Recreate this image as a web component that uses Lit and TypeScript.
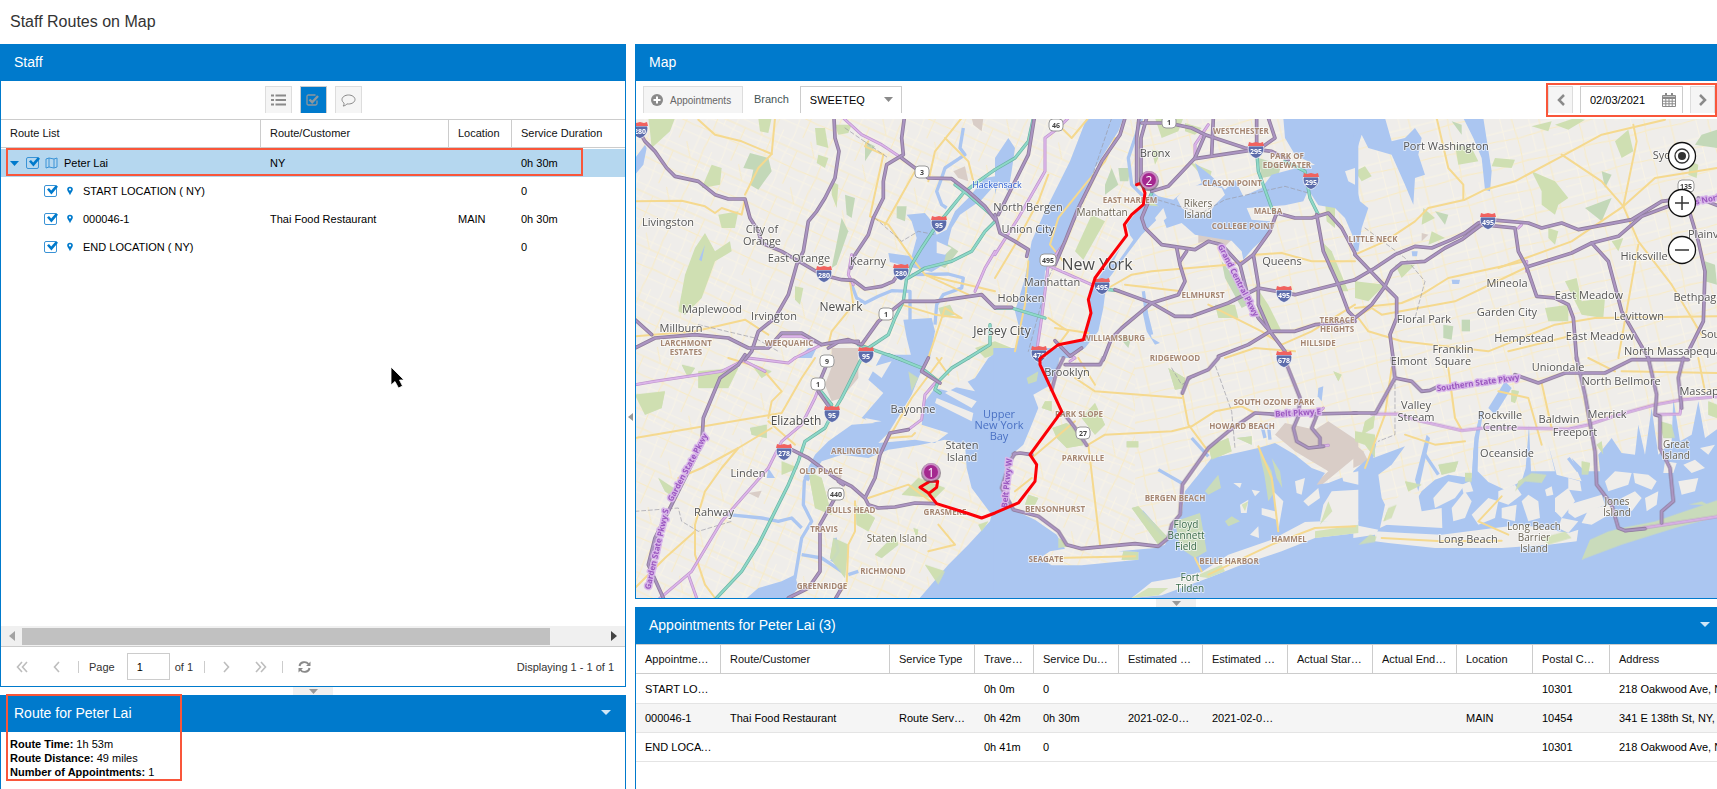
import { LitElement, html, svg, css } from "lit";
import { customElement, property } from "lit/decorators.js";

/* ---------- map data: tiles of 1080 x 720 units, three units to a pixel ---------- */

interface Tile {
  x: number;
  y: number;
  water: string[];
  rivers: string[];
  land: string[];
  green: string[];
  grey: string[];
  yellow: string[];
  pink: string[];
  teal: string[];
  hwy: string[];
}

const TILES: Tile[] = [
  {
    x: 0,
    y: 0,
    water: [
      "M815,290 870,285 890,310 905,350 935,335 960,280 1000,240 1050,180 1080,175 1080,200 1040,245 975,290 950,330 940,370 935,400 925,440 890,462 765,432 760,405 830,415 845,360 830,310",
      "M805,605 890,600 900,640 885,720 830,720 815,660",
      "M210,380 200,430 192,425",
      "M0,120 30,80 35,90 25,140 0,170",
      "M490,720 520,690 545,690 530,720",
    ],
    rivers: [
      "M985,30 975,90 990,110 930,150 920,180 905,220 920,260 935,270",
      "M650,500 665,540 690,555 730,535 770,518 825,520 825,610",
      "M830,470 940,468 985,480 980,510 925,530 905,560 900,620",
    ],
    land: ["M905,370 950,390 930,410 905,405"],
    green: [
      "M40,0 120,0 105,40 50,90 45,40",
      "M180,390 210,345 240,400 285,370 290,400 240,430 200,540 150,590 130,580 150,470",
      "M325,150 345,105 400,120 410,160 370,215 345,200 355,155",
      "M250,290 310,280 300,330 260,330",
      "M590,190 610,200 605,270 590,230",
      "M620,300 640,340 605,440 590,450",
      "M540,30 570,30 580,90 545,80",
      "M230,140 260,150 255,200 200,210",
      "M910,360 970,400 930,450 905,440",
      "M370,0 410,0 400,45 375,40",
      "M550,110 580,120 570,150 545,135",
      "M630,230 660,240 650,300 635,290",
      "M480,505 505,510 495,560 480,545",
      "M910,570 945,560 960,590 920,600",
      "M785,265 815,265 810,310 785,300",
      "M600,20 650,20 640,45 610,50",
      "M1020,690 1080,670 1080,710 1050,720",
      "M690,70 720,85 690,130",
    ],
    grey: ["M955,160 990,145 1000,190 970,180", "M590,690 670,690 670,720 590,720", "M1010,0 1045,0 1040,40 1015,20"],
    yellow: [
      "M0,250 140,248 210,265 240,285 260,270 320,290 330,245",
      "M330,230 370,150 410,108 420,0",
      "M190,5 240,50 320,70 410,108",
      "M980,0 900,100 880,190",
      "M745,110 705,295 760,320 830,420 870,470 1000,530",
      "M700,70 690,85 745,110",
      "M930,60 1000,130 1015,190",
      "M840,160 750,320",
      "M0,655 180,640 330,605 400,650",
      "M645,490 655,560 590,640 580,680",
      "M800,560 900,590 980,600 930,570 880,720",
      "M870,470 1080,520",
    ],
    pink: ["M625,0 680,50 740,80 800,120", "M1080,400 1050,450 1020,520", "M650,410 640,470 655,500", "M480,720 560,680", "M440,655 500,655 560,680"],
    teal: [
      "M1080,155 1030,190 985,225 940,280 900,330 860,390 830,440 815,480 805,550 780,600 760,650 700,690 690,720",
      "M820,480 870,450 950,430 1010,400 1050,340 1080,310",
      "M670,680 800,725",
      "M960,200 1000,230 1080,300",
      "M1065,620 1065,680 1000,720",
    ],
    hwy: [
      "M0,20 30,70 60,100 95,150 120,175 190,190 240,230 280,243 330,243 345,300 370,340 380,375 440,400 500,435 560,470 620,485 655,487 690,513 740,505 775,490 795,460",
      "M597,0 600,60 612,100 600,180 570,240 545,280 520,310 505,400 485,440 460,530 420,600 370,640 350,700 330,725",
      "M808,0 800,60 805,110 755,140 745,190 745,240 715,300 700,350 660,410 648,450",
      "M800,120 840,150 880,180 950,182 1000,220 1050,265 1080,305",
      "M0,605 50,650",
      "M0,690 60,660 180,650 280,660 340,690 400,690 440,645 500,645 560,680 640,665 680,680 730,610 805,550 900,550 1040,530 1080,570",
      "M580,690 610,672 670,670",
    ],
  },
  {
    x: 1080,
    y: 0,
    water: [
      "M275,0 225,130 150,280 110,370 90,480 60,580 75,640 60,690 0,700 0,725 150,725 125,690 140,620 150,460 195,390 265,240 300,150 370,40 385,0",
      "M0,120 40,60 60,90 50,160 40,220 10,190 0,230",
      "M865,0 870,60 900,110 960,140 905,150 830,170 800,210 745,235 720,185 690,215 650,175 600,135 620,195 560,225 535,245 490,235 470,220 455,240 490,265 515,330 560,315 600,350 710,368 740,400 745,425 775,390 830,340 825,310 770,305 755,270 830,265 870,262 925,250 940,215 970,262 1020,270 1050,300 1080,370 1090,370 1090,0",
      "M490,265 440,260 395,320 405,350 310,480 280,540 290,590 265,660 180,695 150,715 220,720 270,690 310,640 325,570 335,490 440,350 470,320 520,270",
      "M440,570 455,590 470,660 495,675 480,680 455,640",
    ],
    rivers: ["M440,0 420,60 400,120 410,200 450,240", "M445,520 455,590 470,650"],
    land: [
      "M545,240 575,205 630,200 680,210 690,230 660,260 640,290 590,290 560,270",
      "M1050,160 1080,150 1080,200 1060,190",
      "M480,300 505,270 515,300 490,320",
      "M400,345 415,365 370,430 350,440",
    ],
    green: [
      "M290,290 330,310 265,425 240,400",
      "M480,0 565,0 550,40 500,60",
      "M330,200 350,150 370,200 330,230",
      "M990,250 1020,260 1020,330 995,310",
      "M580,130 650,160 640,200 600,150",
      "M680,430 720,480 760,560 740,570 690,480",
      "M0,670 50,690 40,720 0,720",
      "M570,15 620,30 600,50 570,40",
      "M370,150 405,150 400,190 375,190",
      "M780,500 820,560 860,640 820,630 790,590",
      "M455,240 490,245 490,265 450,300",
      "M790,120 860,140 850,170 800,180",
      "M660,560 720,560 730,600 670,600",
      "M980,370 1010,400 1060,520 1040,520 1000,450",
      "M370,655 410,655 400,690",
      "M470,95 500,100 480,140",
    ],
    grey: ["M610,325 710,365 690,385 650,365 610,375", "M630,200 655,200 645,225"],
    yellow: [
      "M340,510 410,470 470,460 700,440 740,430",
      "M780,410 860,405 950,430 1080,430",
      "M640,560 800,640 860,680 950,640 1080,560",
      "M390,500 560,520",
      "M205,430 165,380 190,300 270,200 330,130 360,60",
      "M180,630 280,645",
      "M160,600 220,640 190,680",
      "M190,20 230,60 280,0",
      "M0,480 60,380 130,250 160,170",
      "M60,700 90,560 100,430",
      "M690,720 780,690 900,700",
    ],
    pink: ["M220,0 190,30 150,60 150,160 70,300 0,410", "M205,380 160,440 140,600 125,700", "M165,445 290,500", "M640,20 600,80 600,120"],
    teal: [
      "M115,0 100,70 60,120 0,155",
      "M785,100 790,160 830,270 845,290",
      "M870,130 930,160 945,240 970,290",
      "M0,570 50,570 150,600",
      "M340,515 370,518",
      "M470,225 455,260",
    ],
    hwy: [
      "M0,290 15,345 60,370 100,395 95,415",
      "M118,0 100,110 50,210 10,290",
      "M390,0 375,50 320,130 290,190 250,270 210,370 180,440",
      "M432,0 425,60 425,200",
      "M455,0 438,60 438,200",
      "M440,15 520,15 590,30 630,50 750,90 830,100 880,125",
      "M630,50 600,120 520,205 470,220",
      "M600,122 780,95",
      "M655,0 650,110",
      "M785,0 785,90",
      "M820,0 840,60 790,95",
      "M465,240 440,300 450,330 500,380 600,395 640,370 680,380 735,440",
      "M545,390 555,440 570,490 550,530 470,555",
      "M575,400 555,430",
      "M360,515 470,555 540,595 590,595 700,555 790,510 900,530 1080,485",
      "M470,555 380,630 350,660 325,725",
      "M845,285 900,300 950,300 1000,285 1040,330 1080,405",
      "M965,290 985,400 1030,500 1060,580 1080,600",
      "M845,285 825,340 775,410 790,500 790,560 825,640 870,700",
      "M735,440 775,410",
      "M735,440 760,540 790,600 825,640",
      "M825,640 900,640 960,620 1080,610",
      "M670,715 760,680 825,640",
      "M0,568 50,568",
      "M180,668 225,715 260,690",
    ],
  },
  {
    x: 2160,
    y: 0,
    water: [
      "M-5,0 90,0 110,70 150,60 180,30 200,60 190,110 210,170 180,180 175,260 150,200 110,110 40,90 20,50 -5,130",
      "M325,0 385,0 410,160 405,220 390,215 380,120 355,60",
      "M-5,170 15,250 40,270 20,330 10,400 -5,400",
      "M290,485 315,485 312,498 292,498",
      "M170,400 188,400 186,415 172,415",
    ],
    rivers: [],
    land: [],
    green: [
      "M530,160 600,190 640,240 610,260 600,290 560,260 560,220",
      "M820,35 835,100 800,120 780,70",
      "M690,270 770,240 740,310",
      "M630,490 665,480 680,550 750,540 745,600 680,590",
      "M420,120 480,125 470,150 410,145",
      "M740,160 770,170 750,210",
      "M0,160 30,145 50,175 20,190",
      "M300,80 350,90 370,130 310,140",
      "M290,10 320,20 320,50",
      "M205,270 240,300 200,320",
      "M230,340 270,360 220,380",
      "M320,605 345,605 345,640 320,640",
      "M580,330 610,340 600,380 580,360",
      "M530,25 590,10 580,40",
      "M1040,50 1086,35 1086,90 1020,80",
      "M0,490 90,500 40,550 0,540",
      "M120,440 180,440 140,480",
      "M265,620 295,625 290,665 265,660",
      "M600,20 660,0 690,5 640,35",
      "M770,370 805,360 790,400",
      "M240,280 280,290 270,320",
      "M570,570 640,560 640,610 580,610",
      "M1005,130 1030,140 1025,180 1000,170",
      "M1050,430 1080,440 1086,500 1050,490",
    ],
    grey: ["M200,345 220,350 200,370"],
    yellow: [
      "M0,410 90,370 180,310 220,270 330,245 390,215 480,190 620,115 740,50 930,5",
      "M245,0 280,150 325,200 325,245",
      "M620,110 740,190 805,265 850,370 950,500 1040,650",
      "M835,20 845,70 805,265",
      "M805,265 650,370 430,450",
      "M1086,150 900,180 805,265",
      "M0,570 140,555 200,530 280,480 510,430",
      "M50,570 80,590 300,550 510,450",
      "M0,600 50,570",
      "M10,600 40,640 140,670 400,700 600,620 720,600 1086,595",
      "M850,380 790,720",
      "M460,700 660,650",
    ],
    pink: ["M500,320 490,330", "M515,430 515,460"],
    teal: [],
    hwy: [
      "M0,485 60,450 120,410 180,385 230,390 290,365 330,345 370,315 400,305 520,315 560,330 620,315 670,335 830,305 920,250 1000,240",
      "M0,600 50,560 90,505 110,460 140,435 210,430 270,390 320,365 380,320 480,330 490,400 515,447",
      "M515,447 650,405 710,375 790,355 860,295 940,265",
      "M710,375 760,430 800,580 880,720",
      "M515,447 545,535 600,540 640,560 655,600 665,725",
      "M1000,270 1030,370 1050,460 1045,610 1000,700",
      "M0,410 90,505 125,540 125,600 105,650 115,725",
      "M1030,240 1086,262",
    ],
  },
  {
    x: 0,
    y: 720,
    water: [
      "M830,-10 885,-10 850,60 830,110 800,160 760,225 730,255 840,245 900,255 940,225 860,200 870,130 900,90 940,100 1020,60 1060,0 1090,-20 1090,725 850,725 880,690 940,620 1000,560 1065,490 1070,470 1010,390 995,330 990,260 930,245 850,262 760,275 700,300 620,290 560,310 520,370 505,360 540,290 580,250 650,200 720,195 680,180 745,105 700,65 740,-10",
      "M330,725 370,690 440,670 480,650 490,690 460,725",
      "M400,330 420,360 395,360",
    ],
    rivers: [
      "M530,320 508,370 505,440 530,490 500,540 490,600 480,660 430,690 370,710",
      "M500,510 470,480 430,490 380,480 280,470",
      "M500,590 560,600 590,620 620,640",
      "M600,540 610,580 590,610",
      "M640,650 670,640",
    ],
    land: ["M1010,150 930,105 945,95 1025,130", "M1010,190 900,135 905,120 1015,165", "M1020,100 950,85 990,60", "M700,30 770,10 740,60", "M690,180 740,190 700,195"],
    green: [
      "M190,40 310,30 280,90 190,90",
      "M0,110 90,100 80,150 30,170",
      "M595,540 640,560 630,660 585,600",
      "M800,410 850,360 930,390 900,420",
      "M660,440 720,480 700,520 665,500",
      "M345,210 395,200 395,240 350,230",
      "M440,310 490,330 440,350",
      "M870,620 930,640 910,680",
      "M720,590 780,530 790,560 740,600",
      "M520,340 560,360 590,470 540,450",
      "M835,510 850,515 845,540",
      "M70,360 130,400 120,420 90,400",
      "M350,20 410,40 380,60",
      "M820,40 850,60 830,100",
      "M140,20 180,30 160,60",
      "M1030,500 1060,490 1040,520",
    ],
    grey: ["M600,0 670,0 670,60 620,120 590,130 570,80", "M340,405 380,398 370,420", "M600,350 620,350 615,385"],
    yellow: [
      "M0,240 440,165 500,60 540,0",
      "M750,260 830,120 920,0",
      "M760,240 830,235 840,225",
      "M400,180 410,130 440,100 380,30 280,0",
      "M400,190 480,260",
      "M410,210 310,270 260,330 210,400 180,500 180,590 210,680 240,720",
      "M0,690 90,600 180,520",
      "M660,430 660,520 640,560 635,680 600,720",
      "M700,420 820,380 900,440",
      "M910,500 960,560 880,580",
      "M130,360 200,330 310,270",
      "M905,0 940,50",
    ],
    pink: [
      "M0,80 60,70 260,40 340,0 460,15 480,0",
      "M555,80 540,120 500,200 440,250 400,330 260,490 170,640 70,725",
      "M160,650 185,720",
      "M820,215 860,185 870,110 900,75",
      "M390,40 330,10",
    ],
    teal: ["M690,-20 650,60 620,120 590,170 570,210 510,250 490,310 460,380 400,500 370,560 320,640 240,725", "M760,-10 860,30 910,70 900,95 915,105", "M910,70 950,30 1000,0", "M550,90 590,140"],
    hwy: [
      "M330,-10 310,20 255,60 230,120 205,180 200,260 110,440 60,540 40,620 85,720",
      "M575,20 550,80",
      "M550,100 585,150",
      "M470,275 520,300 600,360 650,385 690,420 700,440 730,450 780,447 840,435 900,437",
      "M690,420 720,360 735,290 765,225 820,215",
      "M880,0 860,40 915,75",
      "M600,420 555,500 555,640 520,690 460,720",
      "M600,725 620,690",
      "M610,370 625,380",
    ],
  },
  {
    x: 1080,
    y: 720,
    water: [
      "M-5,-30 200,-30 185,40 160,85 115,110 130,150 110,200 85,260 50,290 30,330 20,400 55,455 120,485 185,530 210,572 165,580 135,600 170,622 260,622 430,605 430,582 370,580 480,570 510,560 540,500 560,470 570,400 610,350 650,300 700,290 790,270 840,255 900,290 950,330 990,345 965,380 1000,375 1090,340 1090,725 -5,725",
      "M970,90 985,85 980,130 968,115",
    ],
    rivers: ["M490,335 560,375", "M590,240 640,295", "M440,460 510,540", "M820,200 825,245", "M800,200 810,240"],
    land: [
      "M410,720 470,672 540,660 620,642 700,590 830,545 930,492 1090,485 1090,525 960,540 860,580 740,620 640,660 500,712",
      "M490,440 530,415 550,430 540,470 510,475 490,460",
      "M765,530 790,505 792,540",
      "M835,400 865,430 850,515 840,450",
      "M900,370 930,360 920,410 905,405",
      "M925,430 970,390 975,420 940,445",
      "M975,490 985,440 1010,400 1090,395 1090,490",
      "M735,440 760,425 755,465 738,465",
      "M800,450 840,460 845,485 800,470",
      "M1040,350 1090,340 1090,380 1045,370",
      "M715,375 740,375 735,390",
      "M770,395 795,400 780,415",
    ],
    green: [
      "M260,180 300,135 330,200 300,230",
      "M540,490 615,465 635,580 600,600 555,570",
      "M410,450 430,445 520,540 490,560",
      "M640,265 700,240 710,280 650,305",
      "M95,60 130,40 125,70 100,78",
      "M520,30 570,60 570,90 540,95",
      "M630,400 670,350 678,390 640,410",
      "M690,490 710,475 735,490 700,505",
      "M790,270 830,340 840,400 820,430 808,350",
      "M830,300 855,340 862,390 845,360",
      "M740,440 760,430 750,460",
      "M385,580 430,582 430,605 380,605",
      "M410,720 460,690 520,690 490,712",
      "M600,655 680,620 690,640 640,660",
      "M1000,430 1012,460 975,500",
      "M100,410 130,420 120,440 90,440",
      "M190,540 230,565 190,570",
      "M960,520 1090,500 1090,525 960,540",
      "M1015,40 1040,50 1030,70",
      "M395,250 430,250 430,268 395,268",
      "M725,240 770,235 770,260",
      "M150,130 170,130 170,160 140,150",
      "M172,210 215,195 255,225 265,262 215,270 185,240",
    ],
    grey: ["M840,230 870,195 960,215 1000,190 1090,250 1090,290 1030,340 975,385 955,380 1000,340 900,280"],
    yellow: [
      "M562,105 580,200 640,280",
      "M280,260 330,230 530,220 590,205 660,160 740,145 780,165",
      "M280,260 300,430 315,560",
      "M240,60 300,100 560,120",
      "M790,265 830,360 850,520",
      "M600,600 620,640",
      "M640,650 830,560 960,510 1080,505",
      "M180,600 420,595",
      "M110,300 240,190",
      "M250,0 300,80",
      "M60,400 110,360",
    ],
    pink: ["M830,170 860,175", "M225,10 240,0 225,-10", "M975,265 1000,262", "M985,150 960,175"],
    teal: [],
    hwy: [
      "M205,0 185,40 170,95",
      "M205,165 240,210 275,262",
      "M60,285 45,310 20,390 55,455 130,475 190,520 215,560 260,572 420,557 490,565 520,540 530,500 555,470 562,380 640,270 700,220 780,165 860,170 1085,165",
      "M55,288 75,285 110,290",
      "M670,0 640,35 580,60 562,105",
      "M875,20 915,120 910,175 895,210 905,250 940,270 985,265",
      "M970,160 950,210 975,240 975,265",
      "M210,20 315,20 325,0",
    ],
  },
  {
    x: 2160,
    y: 720,
    water: [
      "M-5,340 40,300 65,250 55,300 150,265 110,320 70,350 80,420 90,440 75,510 120,488 170,450 200,400 240,365 280,350 350,360 358,240 372,180 368,340 400,372 450,395 500,370 512,330 522,200 528,340 600,340 580,260 605,350 680,370 650,300 690,340 735,340 730,290 770,240 800,285 840,290 850,200 870,290 890,150 910,290 950,250 955,120 975,250 1010,230 1030,130 1050,240 1091,210 1091,725 -5,725",
      "M450,70 470,90 420,170 400,150",
      "M180,365 215,230 225,240 190,400",
    ],
    rivers: ["M380,160 360,280 355,380", "M210,290 250,350", "M640,300 670,340"],
    land: [
      "M60,520 150,525 260,530 400,512 500,500 640,525 670,515 665,550 580,560 440,570 240,570 100,555 60,550",
      "M-5,500 70,515 60,530 -5,540",
      "M90,500 100,440 150,400 190,410 200,460 260,450 262,510 170,505",
      "M235,420 280,370 330,380 300,420 240,450",
      "M290,450 330,400 350,430 330,480 295,490",
      "M350,470 400,420 430,430 420,480 370,500",
      "M430,400 480,380 500,410 460,440 430,430",
      "M440,450 485,440 480,490 440,480",
      "M500,430 520,410 550,430 555,480 520,490",
      "M600,420 640,390 660,430 620,480 600,460",
      "M640,440 740,410 750,440 660,480 640,465",
      "M700,455 760,440 780,460 710,500 680,495",
      "M750,370 780,340 830,345 820,380 760,400",
      "M835,345 880,350 905,370 890,395 840,375",
      "M800,420 840,400 860,420 830,460",
      "M870,420 910,400 905,440 875,460",
      "M930,310 965,315 955,345 925,345",
      "M985,320 1020,305 1050,330 1010,345",
      "M970,370 1030,360 1020,400 980,410",
      "M320,380 345,370 355,400 325,405",
      "M640,360 675,370 680,400 640,395",
      "M570,395 590,385 595,410 575,415",
      "M1035,270 1080,260 1060,290",
      "M215,485 240,470 245,505 215,505",
      "M620,480 670,490 640,525 610,510",
    ],
    green: [
      "M10,560 45,530 65,535 60,552",
      "M680,605 705,545 760,520 800,510 900,490 1091,425 1091,475 960,510 800,560",
      "M530,345 575,350 560,375 510,370 480,400 490,370",
      "M680,310 705,315 700,350 680,350",
      "M470,95 492,100 480,135 468,130",
      "M250,320 310,310 300,340 260,350",
      "M0,220 60,230 60,300 30,260 0,250",
      "M100,450 125,440 110,480 85,490",
      "M560,540 630,520 650,540 580,560",
      "M150,370 200,380 160,400",
      "M725,260 740,250 745,290",
      "M1000,440 1040,430 1060,440",
      "M330,345 350,345 350,372 330,370",
      "M1060,130 1086,140 1086,180 1060,170",
      "M915,190 950,200 960,240 925,240",
      "M30,190 60,170 55,210 20,230",
    ],
    grey: ["M-5,255 25,280 40,310 -5,330"],
    yellow: ["M800,40 1086,45", "M1030,0 1050,100", "M110,30 90,170 30,330", "M280,30 300,180 320,215", "M430,100 520,120 560,260", "M80,540 260,550 440,548", "M440,415 370,490 460,530", "M700,0 780,40", "M560,75 590,210", "M150,230 240,260 330,250"],
    pink: ["M50,168 130,168 180,185 320,217 400,208 640,213 700,200 790,170 900,140 980,125 1091,115", "M900,170 975,168 980,130", "M810,518 1091,475"],
    teal: [],
    hwy: [
      "M-5,165 62,165 120,60 112,0",
      "M120,60 170,70 200,100 225,97 250,85",
      "M480,50 550,75 630,45 750,45 830,5 1000,5",
      "M665,0 690,110 720,280 725,380 770,440 790,510 810,518 870,512",
      "M880,0 905,110 900,170 915,175 915,270 945,330 955,430 920,460 920,495",
      "M985,0 970,60 980,150",
    ],
  },
];

const ROUTE =
  "M1505,200 1520,195 1530,225 1525,260 1490,290 1468,320 1475,352 1420,425 1380,480 1360,545 1368,585 1345,665 1270,680 1215,722 1215,740 1280,880 1185,1010 1205,1040 1200,1090 1150,1155 1080,1185 1040,1200 995,1185 905,1157 880,1125 855,1108 885,1090 908,1090 905,1108 885,1124";

type Kind = "town" | "city" | "metro" | "area" | "small" | "park" | "bay" | "road" | "creek";

interface Label {
  kind: Kind;
  x: number;
  y: number;
  lines: string[];
  turn?: number;
}

const L = (kind: Kind, x: number, y: number, text: string, turn = 0): Label => ({ kind, x, y, lines: text.split("|"), turn });

const LABELS: Label[] = [
  L("town", 100, 310, "Livingston"),
  L("town", 380, 347, "City of|Orange"),
  L("town", 491, 417, "East Orange"),
  L("town", 700, 427, "Kearny"),
  L("city", 618, 564, "Newark"),
  L("town", 232, 571, "Maplewood"),
  L("town", 417, 592, "Irvington"),
  L("town", 137, 628, "Millburn"),
  L("area", 152, 685, "LARCHMONT|ESTATES"),
  L("area", 461, 673, "WEEQUAHIC"),
  L("creek", 1086, 198, "Hackensack"),
  L("city", 1100, 637, "Jersey City"),
  L("town", 1178, 265, "North Bergen"),
  L("town", 1178, 331, "Union City"),
  L("small", 1401, 281, "Manhattan"),
  L("area", 1485, 243, "EAST HARLEM"),
  L("town", 1560, 103, "Bronx"),
  L("metro", 1385, 437, "New York"),
  L("town", 1250, 490, "Manhattan"),
  L("town", 1158, 538, "Hoboken"),
  L("area", 1436, 657, "WILLIAMSBURG"),
  L("area", 1703, 527, "ELMHURST"),
  L("small", 1688, 270, "Rikers|Island"),
  L("area", 1819, 36, "WESTCHESTER"),
  L("area", 1792, 192, "CLASON POINT"),
  L("area", 1956, 123, "PARK OF|EDGEWATER"),
  L("area", 1898, 276, "MALBA"),
  L("area", 1825, 321, "COLLEGE POINT"),
  L("town", 1941, 427, "Queens"),
  L("area", 2106, 615, "TERRACE|HEIGHTS"),
  L("area", 2050, 672, "HILLSIDE"),
  L("area", 1620, 718, "RIDGEWOOD"),
  L("area", 2214, 360, "LITTLE NECK"),
  L("town", 2434, 82, "Port Washington"),
  L("town", 3112, 108, "Syosset"),
  L("town", 3232, 346, "Plainview"),
  L("town", 3028, 411, "Hicksville"),
  L("town", 2617, 493, "Mineola"),
  L("town", 2861, 528, "East Meadow"),
  L("town", 3188, 535, "Bethpage"),
  L("town", 2616, 580, "Garden City"),
  L("town", 3013, 591, "Levittown"),
  L("town", 2367, 601, "Floral Park"),
  L("town", 2668, 657, "Hempstead"),
  L("town", 2895, 651, "East Meadow"),
  L("town", 2454, 708, "Franklin|Square"),
  L("town", 3115, 697, "North Massapequa"),
  L("town", 3242, 645, "South"),
  L("town", 2323, 726, "Elmont"),
  L("town", 2769, 745, "Uniondale"),
  L("town", 2958, 787, "North Bellmore"),
  L("town", 3230, 815, "Massapequa"),
  L("town", 2342, 877, "Valley|Stream"),
  L("town", 2596, 907, "Rockville|Centre"),
  L("town", 2772, 901, "Baldwin"),
  L("town", 2916, 886, "Merrick"),
  L("town", 2820, 940, "Freeport"),
  L("town", 2617, 1003, "Oceanside"),
  L("small", 3124, 993, "Great|Island"),
  L("small", 2945, 1165, "Jones|Island"),
  L("small", 2697, 1257, "Long Beach|Barrier|Island"),
  L("town", 2500, 1261, "Long Beach"),
  L("city", 482, 906, "Elizabeth"),
  L("town", 833, 871, "Bayonne"),
  L("town", 980, 996, "Staten|Island"),
  L("area", 660, 996, "ARLINGTON"),
  L("area", 558, 1056, "OLD PLACE"),
  L("town", 339, 1063, "Linden"),
  L("town", 237, 1180, "Rahway"),
  L("area", 648, 1173, "BULLS HEAD"),
  L("area", 568, 1230, "TRAVIS"),
  L("area", 930, 1179, "GRASMERE"),
  L("small", 785, 1259, "Staten Island"),
  L("area", 743, 1356, "RICHMOND"),
  L("area", 562, 1401, "GREENRIDGE"),
  L("bay", 1091, 918, "Upper|New York|Bay"),
  L("town", 1295, 760, "Brooklyn"),
  L("area", 1333, 885, "PARK SLOPE"),
  L("area", 1345, 1017, "PARKVILLE"),
  L("area", 1260, 1170, "BENSONHURST"),
  L("area", 1232, 1320, "SEAGATE"),
  L("area", 1619, 1137, "BERGEN BEACH"),
  L("area", 1822, 921, "HOWARD BEACH"),
  L("area", 1916, 849, "SOUTH OZONE PARK"),
  L("area", 1962, 1260, "HAMMEL"),
  L("area", 1783, 1326, "BELLE HARBOR"),
  L("park", 1653, 1252, "Floyd|Bennett|Field"),
  L("park", 1664, 1393, "Fort|Tilden"),
  L("road", 155, 1048, "Garden State Pkwy", -62),
  L("road", 62, 1294, "Garden State Pkwy S", -77),
  L("road", 1114, 1095, "Belt Pkwy W", -84),
  L("road", 1813, 487, "Grand Central Pkwy", 63),
  L("road", 1988, 883, "Belt Pkwy E", -3),
  L("road", 2528, 793, "Southern State Pkwy", -8),
  L("road", 3226, 240, "s North", -12),
];

const INTERSTATES: [number, number, string][] = [
  [14, 35, "280"], [912, 318, "95"], [568, 468, "280"], [797, 463, "280"], [693, 712, "95"], [1863, 95, "295"],
  [2028, 190, "295"], [1400, 505, "495"], [1947, 527, "495"], [1212, 708, "478"], [1948, 722, "678"],
  [2560, 310, "495"], [592, 888, "95"], [447, 1003, "278"],
];

const STATE_ROADS: [number, number, string][] = [
  [860, 162, "3"], [753, 587, "1"], [577, 730, "9"], [1262, 22, "46"], [1602, 12, "1"], [1240, 425, "495"],
  [3152, 203, "135"], [550, 798, "1"], [603, 1128, "440"], [1343, 945, "27"],
];

const STOPS: [number, number, string][] = [[887, 1062, "1"], [1543, 185, "2"]];

/* map units to whole pixels */
const px = (u: number) => Math.round(u / 3) - 1;

@customElement("route-map")
class RouteMap extends LitElement {
  static styles = css`
    :host { display: block; position: relative; overflow: hidden; min-height: 0; background: #efedea; }
    .canvas { display: block; position: absolute; inset: 0; width: 100%; height: 100%; }
    .water { fill: #abc6f1; }
    .river { fill: none; stroke: #abc6f1; stroke-width: 10; stroke-linejoin: round; }
    .land { fill: #efedea; }
    .green { fill: #cfdfb2; }
    .green.deep { fill: #c3d8b8; }
    .grey { fill: #d9cdc7; }
    .street { fill: none; stroke: #f8ebc6; stroke-width: 3; }
    .lane { fill: none; stroke: #f8f3e6; stroke-width: 3; }
    .line { fill: none; stroke-linejoin: round; stroke-linecap: round; }
    .yellow { stroke: #f5d98f; stroke-width: 6; }
    .pink-edge { stroke: #bd93cb; stroke-width: 9; }
    .pink { stroke: #dcb6ea; stroke-width: 5; }
    .teal-edge { stroke: #6bb3a4; stroke-width: 10; }
    .teal { stroke: #8ed8c8; stroke-width: 6; }
    .hwy-edge { stroke: #8f7c9c; stroke-width: 11; }
    .hwy { stroke: #ab95c2; stroke-width: 6; }
    .border { stroke: #9a9aa4; stroke-width: 2; stroke-dasharray: 12 8; }
    .route { stroke: #fb0007; stroke-width: 9; }
    text {
      font-family: "Open Sans", "Noto Sans", sans-serif; text-anchor: middle; dominant-baseline: central;
      font-size: 11px; fill: #555; paint-order: stroke; stroke: rgba(255, 255, 255, 0.6); stroke-width: 2px;
      stroke-linejoin: round;
    }
    .city { font-size: 12px; fill: #4c4c4c; }
    .metro { font-size: 16px; fill: #4b4b4b; }
    .area { font-size: 8px; font-weight: 700; fill: #a58672; }
    .small { font-size: 10px; fill: #6a6354; }
    .park { font-size: 10px; fill: #3c6b4c; }
    .bay { font-size: 11px; fill: #4a71c4; stroke: #abc6f1; }
    .creek { font-size: 9px; fill: #2f5fd0; }
    .road { font-size: 8px; font-weight: 700; fill: #9b58c0; stroke: #d9b8ea; stroke-width: 3px; }
    .num { font-size: 7px; font-weight: 700; fill: #fff; stroke: none; }
    .num.dark { fill: #444; }
    .num.stop { font-size: 12px; font-weight: 400; }
    .tools { position: absolute; top: 22px; right: 20px; display: grid; gap: 17px; }
    .tool { width: 30px; height: 30px; padding: 0; border: 0; background: none; display: block; }
    .tool svg { display: block; }
  `;

  private each(key: keyof Tile, cls: string) {
    return TILES.map(
      (t) => svg`<g transform="translate(${t.x} ${t.y})">${(t[key] as string[]).map(
        (d, i) => svg`<path class="${cls}${key === "green" && i % 3 === 2 ? " deep" : ""}" d=${d}></path>`,
      )}</g>`,
    );
  }

  private label(l: Label) {
    const step = l.kind === "area" ? 9 : l.kind === "town" ? 12 : 11;
    const x = px(l.x);
    const y = px(l.y);
    const first = y - ((l.lines.length - 1) * step) / 2;
    return l.lines.map(
      (line, i) =>
        svg`<text class=${l.kind} x=${x} y=${Math.round(first + i * step)} transform=${`rotate(${l.turn ?? 0} ${x} ${y})`}>${line}</text>`,
    );
  }

  render() {
    return html`
      <svg class="canvas" role="img" aria-label="Map of New York with the route of the day">
        <defs>
          <pattern id="streets" width="170" height="150" patternUnits="userSpaceOnUse" patternTransform="rotate(24)">
            <path class="lane" d="M0,20H170M0,64 60,58 170,64M30,0V150M118,0 112,80 118,150M0,122H170M82,0V64"></path>
            <path class="street" d="M0,42H90L170,42M0,96 70,92 170,96M56,0 60,96 56,150M144,42V150M0,0 30,42"></path>
          </pattern>
          <pattern id="island" width="190" height="160" patternUnits="userSpaceOnUse" patternTransform="rotate(-14)">
            <path class="lane" d="M0,30H190M46,0V160M0,110H190M130,0V110M0,76H46"></path>
            <path class="street" d="M0,54 90,60 190,54M80,0 86,90 80,160M160,0V160M0,136 100,130 190,136"></path>
          </pattern>
        </defs>
        <g transform="scale(0.33333) translate(-3 -3)">
          <rect fill="url(#streets)" width="1500" height="1440"></rect>
          <rect fill="url(#island)" x="1500" width="1800" height="1440"></rect>
          ${this.each("green", "green")} ${this.each("grey", "grey")} ${this.each("water", "water")}
          ${this.each("rivers", "river")} ${this.each("land", "land")}
          <g opacity="0.85">${TILES.slice(3).map(
            (t) => svg`<g transform="translate(${t.x} ${t.y})">${t.green.map((d) => svg`<path class="green" d=${d}></path>`)}</g>`,
          )}</g>
          ${this.each("yellow", "line yellow")}
          <path class="line border" d="M1430,0 1350,240 1240,480 1180,700M630,30 760,120M720,300 800,370 850,340 900,350M190,620 360,660 430,700M0,1180 130,1170 140,1210 190,1240 290,1210M1550,240 1700,285 1770,245 1950,205 2020,225M2190,330 2310,420 2370,490 2340,600M1610,750 1640,800 1740,740 1790,880 1800,990M2280,780 2280,950 2230,970"></path>
          ${this.each("pink", "line pink-edge")} ${this.each("pink", "line pink")}
          ${this.each("teal", "line teal-edge")} ${this.each("teal", "line teal")}
          ${this.each("hwy", "line hwy-edge")} ${this.each("hwy", "line hwy")}
        </g>
        ${LABELS.map((l) => this.label(l))}
        ${INTERSTATES.map(
          ([x, y, n]) => svg`<g transform="translate(${px(x)} ${px(y)})">
            <path d="M-7.500,-4 C-9,2 -5,7 0,8.500 C5,7 9,2 7.500,-4Z" fill="#5c6cab" stroke="#fff" stroke-width="0.7"></path>
            <path d="M-7,-8 L-4,-7 0,-8 4,-7 7,-8 8,-4 -8,-4Z" fill="#f0625f"></path>
            <text class="num" y="1">${n}</text></g>`,
        )}
        ${STATE_ROADS.map(
          ([x, y, n]) => svg`<g transform="translate(${px(x)} ${px(y)})">
            <rect x=${n.length > 2 ? -8 : -7} y="-6" width=${n.length > 2 ? 16 : 14} height="12" rx="4" fill="#fff" stroke="#999" stroke-width="1"></rect>
            <text class="num dark">${n}</text></g>`,
        )}
        <g transform="scale(0.33333) translate(-3 -3)"><path class="line route" d=${ROUTE}></path></g>
        ${STOPS.map(
          ([x, y, n]) => svg`<g transform="translate(${px(x)} ${px(y)})">
            <circle cy="1" r="10" fill="#5c4a63" opacity="0.6"></circle>
            <circle r="9" fill="#c98fc4"></circle>
            <circle r="7" fill="#a4288f"></circle>
            <text class="num stop">${n}</text></g>`,
        )}
      </svg>
      <div class="tools">
        ${[
          ["Locate", svg`<circle cx="15" cy="15" r="7" fill="none" stroke="#333" stroke-width="1.3"></circle><circle cx="15" cy="15" r="4" fill="#333"></circle>`],
          ["Zoom in", svg`<path d="M8 15H22M15 8V22" stroke="#333" stroke-width="1.5"></path>`],
          ["Zoom out", svg`<path d="M8 15H22" stroke="#333" stroke-width="1.5"></path>`],
        ].map(
          ([name, glyph]) => html`<button class="tool" aria-label=${name}>
            <svg width="30" height="30"><circle cx="15" cy="15" r="13.5" fill="#fff" stroke="#111" stroke-width="1.3"></circle>${glyph}</svg>
          </button>`,
        )}
      </div>
    `;
  }
}

/* ---------- page ---------- */

interface StaffRow {
  name: string;
  customer: string;
  location: string;
  duration: string;
  root?: boolean;
}

const STAFF: StaffRow[] = [
  { name: "Peter Lai", customer: "NY", location: "", duration: "0h 30m", root: true },
  { name: "START LOCATION ( NY)", customer: "", location: "", duration: "0" },
  { name: "000046-1", customer: "Thai Food Restaurant", location: "MAIN", duration: "0h 30m" },
  { name: "END LOCATION ( NY)", customer: "", location: "", duration: "0" },
];

const COLUMNS: [string, number][] = [
  ["Appointment Nbr.", 85], ["Route/Customer", 169], ["Service Type", 85], ["Travel Time", 59], ["Service Duration", 85],
  ["Estimated Start", 84], ["Estimated End", 85], ["Actual Start Time", 85], ["Actual End Time", 84], ["Location", 76],
  ["Postal Code", 77], ["Address", 240],
];

const APPOINTMENTS: string[][] = [
  ["START LOCATION", "", "", "0h 0m", "0", "", "", "", "", "", "10301", "218 Oakwood Ave, NY, NY"],
  ["000046-1", "Thai Food Restaurant", "Route Service", "0h 42m", "0h 30m", "2021-02-03 09:00", "2021-02-03 09:30", "", "", "MAIN", "10454", "341 E 138th St, NY, NY"],
  ["END LOCATION", "", "", "0h 41m", "0", "", "", "", "", "", "10301", "218 Oakwood Ave, NY, NY"],
];

const down = (w: number, color: string) =>
  html`<svg width=${w} height="5" viewBox="0 0 10 6" preserveAspectRatio="none"><path d="M0 0H10L5 6Z" fill=${color}></path></svg>`;

const chevron = (d: string) =>
  html`<svg width="12" height="12" viewBox="0 0 12 12"><path d=${d} fill="none" stroke="#bdbdbd" stroke-width="1.6"></path></svg>`;

@customElement("app-root")
class AppRoot extends LitElement {
  @property() branch = "SWEETEQ";

  static styles = css`
    :host {
      display: grid; grid-template-rows: 44px minmax(0, 1fr); height: 100vh; overflow: hidden; position: relative;
      font-family: "Liberation Sans", Arial, sans-serif; font-size: 11px; color: #000; background: #fff;
    }
    * { box-sizing: border-box; }
    svg { display: block; }
    button, input, select { font: inherit; margin: 0; border-radius: 0; }
    h1 { margin: 0; padding: 0 10px; font-size: 16px; font-weight: 400; line-height: 44px; color: #333; }
    .columns { display: grid; grid-template-columns: minmax(0, 626fr) 9px minmax(0, 1082fr); min-height: 0; }
    .stack { display: flex; flex-direction: column; min-height: 0; min-width: 0; }
    .panel { display: flex; flex-direction: column; min-height: 0; position: relative; border: 1px solid #007acc; border-top: 0; }
    .grow { flex: 1; }
    .open { border-bottom: 0; }
    .edge { border-right: 0; overflow: hidden; }
    .head {
      display: flex; align-items: center; justify-content: space-between; flex: none; height: 37px; margin: 0 -1px;
      padding: 0 15px 2px 14px; background: #007acc;
    }
    .edge .head { padding-right: 7px; margin-right: 0; }
    h2 { margin: 0; font-size: 14px; font-weight: 400; color: #fff; }
    .plain { padding: 0; border: 0; background: none; display: flex; align-items: center; justify-content: center; }
    .split { display: flex; align-items: center; justify-content: center; }
    .bar { display: flex; justify-content: center; flex: none; height: 8px; }
    .grip { width: 40px; height: 8px; background: #f0f0f0; }
    .modes { display: flex; justify-content: center; gap: 8px; flex: none; height: 38px; padding: 5px 0 6px; }
    .mode {
      width: 27px; height: 27px; padding: 0; background: #f5f5f5; border: 1px solid #ddd; border-bottom: 0;
      display: flex; align-items: center; justify-content: center;
    }
    .mode.on { background: #007acc; border-color: #ccc; }
    table { border-collapse: separate; border-spacing: 0; table-layout: fixed; width: 100%; }
    th, td { padding: 0 9px; font-weight: 400; text-align: left; white-space: nowrap; overflow: hidden; text-overflow: ellipsis; }
    th { height: 30px; border: solid #ccc; border-width: 1px 1px 1px 0; color: #111; }
    th:last-child { border-right: 0; }
    .staff { position: relative; flex: 1; min-height: 0; overflow: hidden; }
    .staff th { height: 29px; padding-bottom: 1px; }
    .staff td { height: 28px; }
    .staff .gap td { height: 1px; padding: 0; }
    .selected td { background: #b5d7ef; }
    .tree { display: flex; align-items: center; gap: 6px; }
    .tree.child { padding-left: 34px; gap: 10px; }
    .toggle { width: 10px; justify-content: flex-start; }
    .check {
      appearance: none; position: relative; flex: none; width: 13px; height: 12px; border: 1px solid #3a93d6; border-radius: 2px;
    }
    .check::after {
      content: ""; position: absolute; left: 2px; top: -1px; width: 11px; height: 10px; background: #007acc;
      clip-path: polygon(0 45%, 18% 30%, 38% 55%, 82% 0, 100% 18%, 40% 95%);
    }
    .frame { position: absolute; border: 2px solid #f9563a; pointer-events: none; }
    .frame.row { left: 5px; top: 29px; width: 577px; height: 28px; }
    .frame.route { left: 5px; top: -1px; width: 176px; height: 87px; }
    .scroll { display: flex; align-items: center; flex: none; height: 20px; padding: 0 8px; gap: 8px; background: #f0f0f0; }
    .track { flex: 1; }
    .thumb { width: 91%; height: 17px; margin-left: -1px; background: #c1c1c1; }
    .pager { display: flex; align-items: center; gap: 7px; flex: none; height: 40px; padding: 0 11px 0 7px; border-top: 1px solid #ccc; color: #333; }
    .step { width: 28px; height: 28px; }
    .rule { width: 1px; height: 12px; background: #ccc; }
    .page-label { margin: 0 5px 0 3px; }
    .page { width: 43px; height: 27px; padding: 0 9px; border: 1px solid #ccc; color: #000; }
    .of { margin: 0 4px 0 -2px; }
    .total { margin-left: auto; }
    .facts { margin: 0; padding: 5px 9px; line-height: 14px; }
    .fact { display: flex; gap: 3px; }
    dt { font-weight: 700; }
    dd { margin: 0; }
    .toolbar { display: flex; align-items: flex-start; flex: none; height: 38px; padding: 2px 0 0 7px; }
    .add {
      display: flex; align-items: center; gap: 7px; width: 100px; height: 27px; margin-top: 3px; padding: 0 0 0 7px;
      background: #f5f5f5; border: 1px solid #ddd; border-bottom: 0; font-size: 10px; color: #666;
    }
    .branch-label { margin: 3px 11px 0; line-height: 27px; color: #455; }
    .pick { position: relative; margin-top: 3px; }
    .pick select {
      appearance: none; width: 102px; height: 27px; padding: 0 0 0 9px; border: 1px solid #ccc; border-bottom: 0;
      background: #fff; color: #000;
    }
    .pick svg { position: absolute; right: 9px; top: 11px; pointer-events: none; }
    .dates { display: flex; gap: 7px; margin-left: auto; height: 34px; padding: 1px 0 0; border: 2px solid #f9563a; }
    .dates .mode { width: 25px; }
    .date { display: flex; align-items: center; width: 103px; height: 27px; border: 1px solid #ccc; border-bottom: 0; padding-right: 6px; }
    .date input { flex: 1; min-width: 0; height: 26px; padding: 0 0 0 9px; border: 0; background: none; color: #000; }
    .appts { width: 1214px; }
    .appts td { height: 29px; border-bottom: 1px solid #e4e4e4; }
    .appts .gap td { height: 1px; padding: 0; border: 0; }
    .appts .alt td { background: #f5f5f5; }
    .lower-left { height: 94px; flex: none; }
    .lower-right { height: 182px; flex: none; }
    route-map { flex: 1; }
    .pointer { position: absolute; left: 390px; top: 366px; pointer-events: none; }
  `;

  private staffRow(r: StaffRow) {
    return html`<tr class=${r.root ? "selected" : ""}>
      <td>
        <div class="tree ${r.root ? "" : "child"}">
          ${r.root ? html`<button class="plain toggle" aria-label="Collapse ${r.name}">${down(9, "#007acc")}</button>` : ""}
          <input class="check" type="checkbox" checked aria-label="Show ${r.name}" />
          ${r.root
            ? html`<svg width="13" height="12" viewBox="0 0 13 12"><path d="M1 2 4 1 9 2 12 1V10L9 11 4 10 1 11ZM4 1V10M9 2V11" fill="none" stroke="#3a93d6"></path></svg>`
            : html`<svg width="6" height="10" viewBox="0 0 7 10"><path d="M3.5 0A3.3 3.3 0 0 1 6.8 3.3C6.8 5.5 4.6 7 3.5 10 2.400 7 .2 5.5 .2 3.300A3.300 3.300 0 0 1 3.500 0Z" fill="#007acc"></path><circle cx="3.5" cy="3.2" r="1.3" fill="#fff"></circle></svg>`}
          <span>${r.name}</span>
        </div>
      </td>
      <td>${r.customer}</td>
      <td>${r.location}</td>
      <td>${r.duration}</td>
    </tr>`;
  }

  render() {
    return html`
      <h1>Staff Routes on Map</h1>
      <div class="columns">
        <div class="stack">
          <section class="panel grow">
            <header class="head"><h2>Staff</h2></header>
            <div class="modes">
              <button class="mode" aria-label="List">
                <svg width="15" height="12" viewBox="0 0 15 12"><path d="M0 1.500H3M0 6H3M0 10.500H3M4.500 1.500H15M4.500 6H15M4.500 10.500H15" stroke="#8a8a8a" stroke-width="2"></path></svg>
              </button>
              <button class="mode on" aria-label="Routes">
                <svg width="14" height="12" viewBox="0 0 14 12"><path d="M11 6.500V9.500Q11 11 9.500 11H2.500Q1 11 1 9.500V2.500Q1 1 2.500 1H9.500" fill="none" stroke="#8d979e" stroke-width="1.300"></path><path d="M3.500 5.500 6.200 8.200 12 2" fill="none" stroke="#8d979e" stroke-width="2.400"></path></svg>
              </button>
              <button class="mode" aria-label="Messages">
                <svg width="15" height="13" viewBox="0 0 15 13"><path d="M7.500 1C11 1 14 3 14 5.500S11 10 7.500 10C7 10 6.500 10 6 9.900 5 11 3.500 12 2 12 3 11 3.200 10 3 9 1.800 8.200 1 7 1 5.500 1 3 4 1 7.500 1Z" fill="none" stroke="#8a8a8a"></path></svg>
              </button>
            </div>
            <div class="staff">
              <table>
                <colgroup><col style="width:260px" /><col style="width:188px" /><col style="width:63px" /><col /></colgroup>
                <thead><tr><th>Route List</th><th>Route/Customer</th><th>Location</th><th>Service Duration</th></tr></thead>
                <tbody><tr class="gap"><td colspan="4"></td></tr>${STAFF.map((r) => this.staffRow(r))}</tbody>
              </table>
              <div class="frame row"></div>
            </div>
            <div class="scroll">
              <svg width="6" height="10"><path d="M6 0V10L0 5Z" fill="#a3a3a3"></path></svg>
              <div class="track"><div class="thumb"></div></div>
              <svg width="6" height="10"><path d="M0 0V10L6 5Z" fill="#444"></path></svg>
            </div>
            <div class="pager">
              <button class="plain step" aria-label="First page">${chevron("M6 1 1.500 6 6 11M11 1 6.500 6 11 11")}</button>
              <button class="plain step" aria-label="Previous page">${chevron("M8 1 3.500 6 8 11")}</button>
              <span class="rule"></span>
              <label class="page-label" for="page">Page</label>
              <input class="page" id="page" type="text" value="1" />
              <span class="of">of 1</span>
              <span class="rule"></span>
              <button class="plain step" aria-label="Next page">${chevron("M4 1 8.500 6 4 11")}</button>
              <button class="plain step" aria-label="Last page">${chevron("M1 1 5.500 6 1 11M6 1 10.500 6 6 11")}</button>
              <span class="rule"></span>
              <button class="plain step" aria-label="Refresh">
                <svg width="13" height="12" viewBox="0 0 13 12"><path d="M1.500 5A5 4.500 0 0 1 10.500 3M11.500 7A5 4.500 0 0 1 2.500 9" fill="none" stroke="#8a8a8a" stroke-width="1.900"></path><path d="M12.500 .5V5H8ZM.5 11.500V7H5Z" fill="#8a8a8a"></path></svg>
              </button>
              <span class="total">Displaying 1 - 1 of 1</span>
            </div>
          </section>
          <div class="bar"><button class="plain grip" aria-label="Collapse route panel">${down(9, "#999")}</button></div>
          <section class="panel open lower-left">
            <header class="head">
              <h2>Route for Peter Lai</h2>
              <button class="plain" aria-label="Collapse">${down(10, "#cfe6f7")}</button>
            </header>
            <dl class="facts">
              <div class="fact"><dt>Route Time:</dt><dd>1h 53m</dd></div>
              <div class="fact"><dt>Route Distance:</dt><dd>49 miles</dd></div>
              <div class="fact"><dt>Number of Appointments:</dt><dd>1</dd></div>
            </dl>
            <div class="frame route"></div>
          </section>
        </div>
        <div class="split">
          <button class="plain" aria-label="Collapse staff panel"><svg width="5" height="8"><path d="M5 0V8L0 4Z" fill="#999"></path></svg></button>
        </div>
        <div class="stack">
          <section class="panel grow edge">
            <header class="head"><h2>Map</h2></header>
            <div class="toolbar">
              <button class="add">
                <svg width="12" height="12" viewBox="0 0 12 12"><circle cx="6" cy="6" r="6" fill="#8a8a8a"></circle><path d="M6 2.500V9.500M2.500 6H9.500" stroke="#fff" stroke-width="2"></path></svg>
                Appointments
              </button>
              <label class="branch-label" for="branch">Branch</label>
              <div class="pick"><select id="branch"><option>${this.branch}</option></select>${down(9, "#8a8a8a")}</div>
              <div class="dates">
                <button class="mode" aria-label="Previous day"><svg width="8" height="12"><path d="M7 1 2 6 7 11" fill="none" stroke="#8a8a8a" stroke-width="2.500"></path></svg></button>
                <div class="date">
                  <input type="text" value="02/03/2021" aria-label="Date" />
                  <svg width="14" height="14" viewBox="0 0 14 14"><path d="M.5 2.500H13.500V13.500H.5ZM.5 5.500H13.500M.5 8.200H13.500M.5 10.800H13.500M3.800 5.500V13.500M7 5.500V13.500M10.200 5.500V13.500" fill="none" stroke="#8a8a8a"></path><path d="M.5 3.500H13.500V5.500H.5ZM3 0H5V3H3ZM9 0H11V3H9Z" fill="#8a8a8a"></path></svg>
                </div>
                <button class="mode" aria-label="Next day"><svg width="8" height="12"><path d="M1 1 6 6 1 11" fill="none" stroke="#8a8a8a" stroke-width="2.500"></path></svg></button>
              </div>
            </div>
            <route-map></route-map>
          </section>
          <div class="bar"><button class="plain grip" aria-label="Collapse appointments">${down(9, "#999")}</button></div>
          <section class="panel open edge lower-right">
            <header class="head">
              <h2>Appointments for Peter Lai (3)</h2>
              <button class="plain" aria-label="Collapse">${down(10, "#cfe6f7")}</button>
            </header>
            <table class="appts">
              <colgroup>${COLUMNS.map(([, w]) => html`<col style="width:${w}px" />`)}</colgroup>
              <thead><tr>${COLUMNS.map(([name]) => html`<th>${name}</th>`)}</tr></thead>
              <tbody>
                <tr class="gap"><td colspan="12"></td></tr>
                ${APPOINTMENTS.map((row, i) => html`<tr class=${i % 2 ? "alt" : ""}>${row.map((v) => html`<td>${v}</td>`)}</tr>`)}
              </tbody>
            </table>
          </section>
        </div>
      </div>
      <svg class="pointer" width="15" height="23" viewBox="0 0 15 23"><path d="M1 1V19L5 15.500 8.500 22 12.500 20 9.500 14H14Z" fill="#000" stroke="#fff" stroke-width="0.800"></path></svg>
    `;
  }
}
